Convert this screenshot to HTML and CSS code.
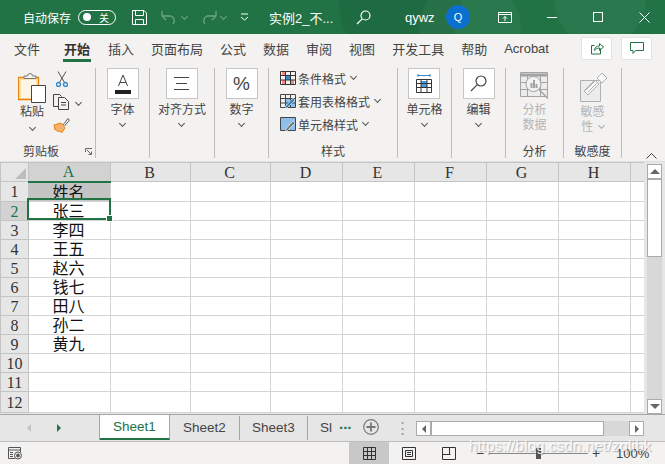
FILE: index.html
```html
<!DOCTYPE html>
<html lang="zh-CN">
<head>
    <meta charset="UTF-8">
    <meta name="viewport" content="width=device-width, initial-scale=1.0">
    <title>实例2 - Excel</title>
    <link rel="stylesheet" href="styles.css">
</head>
<body>

    <!-- Title bar -->
    <div class="titlebar">
        <span class="autosave-label">自动保存</span>
        <div class="toggle"><span class="toggle-dot"></span><span class="toggle-text">关</span></div>
        <svg class="tb-save" width="17" height="17" viewBox="0 0 17 17" fill="none" stroke="#fff"><path d="M1.5 1.5h11.5l2.5 2.5v11.5h-14zM4.5 1.5v5h8v-5M4.5 15.5v-5h8v5"/></svg>
        <svg class="tb-undo" width="17" height="16" viewBox="0 0 17 16" fill="none" stroke="#6fa386" stroke-width="1.3"><path d="M1 7l4 4M1 7l0-5M1 7h9a5 5 0 0 1 2 8"/></svg>
        <span class="tb-chev dim"></span>
        <svg class="tb-redo" width="17" height="16" viewBox="0 0 17 16" fill="none" stroke="#6fa386" stroke-width="1.3"><path d="M16 7l-4 4M16 7l0-5M16 7h-9a5 5 0 0 0-2 8"/></svg>
        <span class="tb-chev dim"></span>
        <svg class="tb-custom" width="9" height="8" viewBox="0 0 9 8" fill="none" stroke="#fff"><path d="M1 1h7M1 4l3.500 3 3.500-3"/></svg>
        <span class="doc-name">实例2_不...</span>
        <svg class="tb-search" width="15" height="15" viewBox="0 0 15 15" fill="none" stroke="#fff" stroke-width="1.2"><circle cx="9.500" cy="5.500" r="4.500"/><path d="M6.200 8.800L1 14"/></svg>
        <span class="user-name">qywz</span>
        <div class="avatar">Q</div>
        <svg class="tb-display" width="14" height="11" viewBox="0 0 14 11" fill="none" stroke="#fff"><path d="M.5.500h13v10h-13zM.5 2.500h13M7 9V4.500M5 6.500l2-2 2 2"/></svg>
        <span class="win-min"></span>
        <span class="win-max"></span>
        <svg class="win-close" width="11" height="11" viewBox="0 0 11 11" fill="none" stroke="#fff"><path d="M.5.500l10 10M10.500.500l-10 10"/></svg>
    </div>

    <!-- Ribbon tabs -->
    <div class="tabs">
        <span>文件</span>
        <span class="tab-active">开始</span>
        <span>插入</span>
        <span>页面布局</span>
        <span>公式</span>
        <span>数据</span>
        <span>审阅</span>
        <span>视图</span>
        <span>开发工具</span>
        <span>帮助</span>
        <span>Acrobat</span>
        <div class="tabs-actions">
            <div class="action-button">
                <svg width="14" height="14" viewBox="0 0 14 14" fill="none" stroke="#217346"><path d="M10.500 7.500v5.500h-9V4.500h3"/><path d="M4.500 9.500c0-3 2-4.500 5-4.500V2.500l4 3.500-4 3.500V7c-2 0-3.500.500-5 2.500z"/></svg>
            </div>
            <div class="action-button">
                <svg width="14" height="13" viewBox="0 0 14 13" fill="none" stroke="#217346"><path d="M.5.500h13v8h-8l-2.500 3v-3h-2.500z"/></svg>
            </div>
        </div>
    </div>

    <!-- Ribbon -->
    <div class="ribbon">
        <div class="group group-clipboard">
            <div class="group-body clip-body">
                <div class="paste">
                    <svg width="28" height="31" viewBox="0 0 28 31" fill="none"><path d="M.5 5.500h20v22h-20z" fill="#fbe3b4" stroke="#e8830c" stroke-width="1.300"/><path d="M3 8h15v18H3z" fill="#fdf6e6"/><path d="M6 6.500V4h3.500a2.500 2.500 0 0 1 5 0H18v2.500z" fill="#f3f2f1" stroke="#777"/><path d="M13.500 13.500h14v17h-14z" fill="#fff" stroke="#444"/></svg>
                    <span>粘贴</span>
                    <i class="chev"></i>
                </div>
                <div class="clip-tools">
                    <svg class="clip-cut" width="12" height="16" viewBox="0 0 12 16" fill="none" stroke="#555"><path d="M2 .5l6.500 11M10 .5l-6.500 11"/><circle cx="2.500" cy="13.500" r="2" stroke="#2e86c9" stroke-width="1.300"/><circle cx="9.500" cy="13.500" r="2" stroke="#2e86c9" stroke-width="1.300"/></svg>
                    <div class="clip-copy">
                        <svg width="17" height="16" viewBox="0 0 17 16" fill="none" stroke="#444"><path d="M5.500 12.500H.5V.5h6l2 2"/><path d="M5.500 3.500h6l4 4v8h-10zM8 8.500h5M8 11h5"/></svg>
                        <i class="chev"></i>
                    </div>
                    <svg class="clip-brush" width="17" height="15" viewBox="0 0 17 15" fill="none"><path d="M1 7l7-2 4 5-3 4.500L6 13l-1.500.500L3 11.500 2 12z" fill="#f6b26b" stroke="#e8830c"/><path d="M10 7l5-6.500 1.500 1.500-5 6" fill="#fff" stroke="#555"/></svg>
                </div>
            </div>
            <div class="group-label">剪贴板
                <svg class="launcher" width="7" height="7" viewBox="0 0 7 7" fill="none" stroke="#666"><path d="M.5 4V.5H7M2 2l4.500 4.500M3.500 6.500h3v-3"/></svg>
            </div>
        </div>

        <div class="group group-font">
            <div class="group-body big-button">
                <div class="big-box">
                    <svg width="16" height="20" viewBox="0 0 16 20"><path d="M3.500 12L8 1l4.500 11M5 8.500h6" fill="none" stroke="#444"/><path d="M0 16h16v4H0z" fill="#222"/></svg>
                </div>
                <span>字体</span>
                <i class="chev"></i>
            </div>
        </div>

        <div class="group group-align">
            <div class="group-body big-button">
                <div class="big-box">
                    <svg width="15" height="13" viewBox="0 0 15 13" fill="none" stroke="#444"><path d="M0 .5h15M2 6.500h11M0 12.500h15"/></svg>
                </div>
                <span>对齐方式</span>
                <i class="chev"></i>
            </div>
        </div>

        <div class="group group-number">
            <div class="group-body big-button">
                <div class="big-box percent">%</div>
                <span>数字</span>
                <i class="chev"></i>
            </div>
        </div>

        <div class="group group-styles">
            <div class="group-body style-list">
                <div class="style-row">
                    <svg width="16" height="14" viewBox="0 0 16 14"><path d="M2 1h4v4H2zM2 9h4v4H2zM10 9h4v4h-4z" fill="#f28b8b"/><path d="M6 5h4v4H6z" fill="#3a8ad1"/><path d="M.5.500h15v13H.5zM.5 4.500h15M.5 9h15M5.500.5v13M10.500.5v13" fill="none" stroke="#333"/></svg>
                    <span>条件格式</span><i class="chev"></i>
                </div>
                <div class="style-row">
                    <svg width="16" height="14" viewBox="0 0 16 14"><path d="M6 5h9v8H6z" fill="#8cc0ea"/><path d="M.5.500h15v13H.5zM.5 4.500h15M.5 9h15M5.500.5v13M10.500.5v13" fill="none" stroke="#444"/><path d="M5 13l8-9 2 2-8 8z" fill="#2e7cc0" stroke="#fff" stroke-width=".6"/></svg>
                    <span>套用表格格式</span><i class="chev"></i>
                </div>
                <div class="style-row">
                    <svg width="16" height="14" viewBox="0 0 16 14"><path d="M1 1h14v12H1z" fill="#8cc0ea"/><path d="M.5.500h15v13H.5z" fill="none" stroke="#444"/><path d="M5 13l8-9 2 2-8 8z" fill="#777" stroke="#fff" stroke-width=".6"/></svg>
                    <span>单元格样式</span><i class="chev"></i>
                </div>
            </div>
            <div class="group-label">样式</div>
        </div>

        <div class="group group-cells">
            <div class="group-body big-button">
                <div class="big-box">
                    <svg width="16" height="19" viewBox="0 0 16 19" fill="none"><path d="M5 7h6v6H5z" fill="#4a9ad8"/><path d="M.5 5.500h15v13H.5zM.5 9.500h15M.5 13.500h15M5 5.500v13M11 5.500v13" stroke="#333"/><path d="M2 1.500h12M2 0v3M14 0v3" stroke="#2e86c9"/></svg>
                </div>
                <span>单元格</span>
                <i class="chev"></i>
            </div>
        </div>

        <div class="group group-edit">
            <div class="group-body big-button">
                <div class="big-box">
                    <svg width="17" height="17" viewBox="0 0 17 17" fill="none" stroke="#444" stroke-width="1.200"><circle cx="11" cy="6" r="5"/><path d="M7.300 9.700L1 16"/></svg>
                </div>
                <span>编辑</span>
                <i class="chev"></i>
            </div>
        </div>

        <div class="group group-analysis">
            <div class="group-body muted-button">
                <svg width="29" height="28" viewBox="0 0 29 28" fill="none" stroke="#a3a3a3"><path d="M.5.500h27v24H.5z" fill="#ececec"/><path d="M.5 3h27" stroke-width="3"/><path d="M.5 10.500h27M.5 17.500h27M7.500 3v21M20.500 3v21"/><circle cx="13.500" cy="12" r="7.500" fill="#f3f2f1"/><path d="M10.500 11h2v5h-2zM13 8h2v8h-2zM15.500 12h2v4h-2z" fill="#a3a3a3" stroke="none"/><path d="M19 17.500l9 9" stroke-width="1.500"/></svg>
                <span>分析<br>数据</span>
            </div>
            <div class="group-label">分析</div>
        </div>

        <div class="group group-sens">
            <div class="group-body muted-button">
                <svg class="sens-icon" width="28" height="30" viewBox="0 0 28 30" fill="none" stroke="#b0b0b0"><path d="M.5 8.500h20v21H.5z" fill="#ececec"/><path d="M4 19L15 8l4 4-11 11z" fill="#f8f8f8"/><path d="M6 18l9-9M8 20l9-9"/><path d="M17 6l5-5 5 5-5 5z" fill="#f8f8f8"/></svg>
                <span>敏感<br>性 <i class="chev chev-muted"></i></span>
            </div>
            <div class="group-label">敏感度</div>
        </div>

        <svg class="ribbon-collapse" width="11" height="6" viewBox="0 0 11 6" fill="none" stroke="#444"><path d="M.5 5.500l5-5 5 5"/></svg>
    </div>

    <!-- Sheet -->
    <div class="sheet-area">
        <div class="grid-wrap">
            <table class="sheet">
                <colgroup>
                    <col class="c-head"><col class="c-a"><col class="c-wide"><col class="c-wide"><col class="c-std"><col class="c-std"><col class="c-std"><col class="c-std"><col class="c-std"><col class="c-rest">
                </colgroup>
                <tr class="head-row"><th class="corner"><i></i></th><th class="sel-col">A</th><th>B</th><th>C</th><th>D</th><th>E</th><th>F</th><th>G</th><th>H</th><th></th></tr>
                <tr><th>1</th><td class="sel-head">姓名</td><td></td><td></td><td></td><td></td><td></td><td></td><td></td><td></td></tr>
                <tr><th class="sel-row">2</th><td>张三</td><td></td><td></td><td></td><td></td><td></td><td></td><td></td><td></td></tr>
                <tr><th>3</th><td>李四</td><td></td><td></td><td></td><td></td><td></td><td></td><td></td><td></td></tr>
                <tr><th>4</th><td>王五</td><td></td><td></td><td></td><td></td><td></td><td></td><td></td><td></td></tr>
                <tr><th>5</th><td>赵六</td><td></td><td></td><td></td><td></td><td></td><td></td><td></td><td></td></tr>
                <tr><th>6</th><td>钱七</td><td></td><td></td><td></td><td></td><td></td><td></td><td></td><td></td></tr>
                <tr><th>7</th><td>田八</td><td></td><td></td><td></td><td></td><td></td><td></td><td></td><td></td></tr>
                <tr><th>8</th><td>孙二</td><td></td><td></td><td></td><td></td><td></td><td></td><td></td><td></td></tr>
                <tr><th>9</th><td>黄九</td><td></td><td></td><td></td><td></td><td></td><td></td><td></td><td></td></tr>
                <tr><th>10</th><td></td><td></td><td></td><td></td><td></td><td></td><td></td><td></td><td></td></tr>
                <tr><th>11</th><td></td><td></td><td></td><td></td><td></td><td></td><td></td><td></td><td></td></tr>
                <tr class="row-tall"><th>12</th><td></td><td></td><td></td><td></td><td></td><td></td><td></td><td></td><td></td></tr>
            </table>
            <div class="cell-cursor"><i></i></div>
        </div>
        <div class="vscroll">
            <div class="sb-btn"><i class="tri tri-up"></i></div>
            <div class="vthumb"></div>
            <div class="vtrack"></div>
            <div class="sb-btn"><i class="tri tri-down"></i></div>
        </div>
    </div>

    <!-- Sheet tabs -->
    <div class="tabbar">
        <div class="sheet-nav"><i class="tri tri-left dim"></i><i class="tri tri-right green"></i></div>
        <div class="sheet-tab active">Sheet1</div>
        <div class="sheet-tab">Sheet2</div>
        <div class="sheet-tab sep">Sheet3</div>
        <div class="sheet-tab cut">Sl</div>
        <div class="more-tabs">...</div>
        <div class="add-sheet">
            <svg width="16" height="16" viewBox="0 0 16 16" fill="none" stroke="#777"><circle cx="8" cy="8" r="7.300" stroke-width="1.200"/><path d="M8 3.500v9M3.500 8h9" stroke-width="1.800"/></svg>
        </div>
        <div class="tab-dots">⋮</div>
        <div class="hscroll">
            <div class="hs-btn"><i class="tri tri-left"></i></div>
            <div class="hthumb"></div>
            <div class="htrack"></div>
            <div class="hs-btn"><i class="tri tri-right"></i></div>
        </div>
    </div>

    <!-- Status bar -->
    <div class="statusbar">
        <svg class="macro-icon" width="14" height="13" viewBox="0 0 14 13" fill="none" stroke="#555"><path d="M7 11.500H.5V.5h12V5M.5 3h12M2 5.500h3M2 7.500h3M2 9.500h3"/><circle cx="10" cy="8.500" r="3.500"/><circle cx="10" cy="8.500" r="1.500" fill="#555"/></svg>
        <div class="view-button active">
            <svg width="13" height="13" viewBox="0 0 13 13" fill="none" stroke="#333"><path d="M.5.500h12v12H.5zM.5 4.500h12M.5 8.500h12M4.500.5v12M8.500.5v12"/></svg>
        </div>
        <div class="view-button">
            <svg width="14" height="13" viewBox="0 0 14 13" fill="none" stroke="#333"><path d="M.5.500h13v12H.5zM3.500 3.500h7v6h-7zM5 5.500h4M5 7.500h4"/></svg>
        </div>
        <div class="view-button">
            <svg width="14" height="13" viewBox="0 0 14 13" fill="none" stroke="#333"><path d="M.5.500h13v12H.5zM.5 7.500h8M7.500.5v7"/></svg>
        </div>
        <div class="zoom-ctl">
            <span class="zoom-sign">−</span>
            <div class="zoom-slider"><i></i></div>
            <span class="zoom-sign">+</span>
            <span class="zoom-value">100%</span>
        </div>
    </div>

    <div class="watermark">https://blog.csdn.net/zqlibk</div>

</body>
</html>
```
FILE: styles.css
```css
:root {
    --green: #217346;
    --ribbon-bg: #f3f2f1;
    --bar-bg: #e6e6e6;
    --grid-line: #d4d4d4;
    --text-dark: #444444;
    --ui-font: "Liberation Sans", "Noto Sans CJK SC", sans-serif;
    --cell-font: "Liberation Serif", "Noto Sans CJK SC", serif;
}

* {
    margin: 0;
    padding: 0;
    box-sizing: border-box;
}

body {
    position: relative;
    width: 665px;
    height: 464px;
    overflow: hidden;
    font-family: var(--ui-font);
    font-size: 12px;
    color: var(--text-dark);
    background-color: var(--ribbon-bg);
}

i {
    display: block;
}

/* Title bar */
.titlebar {
    display: flex;
    align-items: center;
    height: 34px;
    padding-left: 23px;
    color: #fff;
    background-color: var(--green);
    background-image:
        radial-gradient(circle at 400px 5px, rgba(0, 0, 0, 0.07) 0 60px, transparent 62px),
        radial-gradient(circle at 470px 30px, rgba(255, 255, 255, 0.04) 0 50px, transparent 52px),
        radial-gradient(circle at 600px 0, rgba(255, 255, 255, 0.04) 0 45px, transparent 47px);
}

.autosave-label {
    width: 55px;
}

.toggle {
    display: flex;
    align-items: center;
    justify-content: space-between;
    width: 38px;
    height: 15px;
    padding: 0 6px 0 4px;
    border: 1px solid #fff;
    border-radius: 8px;
    font-size: 10px;
}

.toggle-dot {
    width: 8px;
    height: 8px;
    border-radius: 50%;
    background-color: #fff;
}

.tb-save { margin-left: 15px; }
.tb-undo { margin-left: 13px; }
.tb-redo { margin-left: 13px; }
.tb-custom { margin-left: 14px; }

.tb-chev {
    width: 5px;
    height: 5px;
    margin: -2px 0 0 4px;
    border-right: 1px solid #fff;
    border-bottom: 1px solid #fff;
    transform: rotate(45deg);
}

.tb-chev.dim {
    border-color: #6fa386;
}

.doc-name {
    width: 62px;
    margin-left: 20px;
    font-size: 13px;
    white-space: nowrap;
}

.tb-search { margin-left: 25px; }

.user-name {
    width: 40px;
    margin-left: 34px;
    font-size: 13px;
}

.avatar {
    display: flex;
    align-items: center;
    justify-content: center;
    width: 24px;
    height: 24px;
    margin-left: 1px;
    border-radius: 50%;
    font-size: 11px;
    background-color: #0a6fcf;
}

.tb-display { margin-left: 28px; }

.win-min {
    width: 10px;
    height: 1px;
    margin-left: 35px;
    background-color: #fff;
}

.win-max {
    width: 10px;
    height: 10px;
    margin-left: 36px;
    border: 1px solid #fff;
}

.win-close { margin-left: 36px; }

/* Ribbon tabs */
.tabs {
    display: flex;
    align-items: center;
    gap: 17px;
    height: 28px;
    padding: 0 13px 0 14px;
    font-size: 13px;
    background-color: var(--ribbon-bg);
}

.tab-active {
    position: relative;
    margin: 0 1px 0 7px;
    font-weight: bold;
    color: #333;
}

.tab-active::after {
    content: "";
    position: absolute;
    left: -1px;
    right: -1px;
    top: 20px;
    height: 3px;
    background-color: var(--green);
}

.tabs-actions {
    display: flex;
    gap: 9px;
    margin-left: auto;
}

.action-button {
    display: flex;
    align-items: center;
    justify-content: center;
    width: 31px;
    height: 23px;
    border: 1px solid #e2e2e2;
    border-radius: 2px;
    background-color: #fff;
}

/* Ribbon */
.ribbon {
    position: relative;
    display: flex;
    height: 100px;
    padding: 6px 0 4px;
    border-bottom: 1px solid #e0e0e0;
}

.group {
    display: flex;
    flex-direction: column;
    align-items: center;
    height: 90px;
    border-right: 1px solid #bdbdbd;
}

.group-clipboard { width: 96px; }
.group-font { width: 54px; }
.group-align { width: 65px; }
.group-number { width: 54px; }
.group-styles { width: 129px; }
.group-cells { width: 54px; }
.group-edit { width: 54px; }
.group-analysis { width: 58px; }
.group-sens { width: 58px; }

.group-body {
    flex: 1;
}

.group-label {
    position: relative;
    height: 16px;
    line-height: 20px;
    text-align: center;
}

.chev {
    width: 5px;
    height: 5px;
    border-right: 1px solid #555;
    border-bottom: 1px solid #555;
    transform: rotate(45deg);
}

.chev-muted {
    display: inline-block;
    margin: 0 0 3px 2px;
    border-color: #aaa;
}

/* Clipboard group */
.group-clipboard {
    align-items: stretch;
}

.clip-body {
    display: flex;
    padding: 4px 0 0 18px;
}

.paste {
    display: flex;
    flex-direction: column;
    align-items: center;
    width: 28px;
}

.paste span {
    margin-top: 1px;
    line-height: 16px;
}

.paste .chev {
    margin-top: 5px;
}

.clip-tools {
    display: flex;
    flex-direction: column;
    align-items: flex-start;
    gap: 7px;
    margin-left: 7px;
}

.clip-cut {
    margin: -1px 0 0 3px;
}

.clip-copy {
    display: flex;
    align-items: center;
    gap: 6px;
}

.clip-brush {
    margin-top: 1px;
}

.group-clipboard .group-label {
    padding-right: 13px;
}

.launcher {
    position: absolute;
    right: 3px;
    top: 6px;
}

/* Big ribbon buttons */
.big-button {
    display: flex;
    flex-direction: column;
    align-items: center;
}

.big-box {
    display: flex;
    align-items: center;
    justify-content: center;
    width: 32px;
    height: 31px;
    margin-bottom: 3px;
    border: 1px solid #c6c6c6;
    background-color: #fff;
}

.big-button span {
    line-height: 16px;
}

.big-button .chev {
    margin-top: 3px;
}

.percent {
    font-size: 19px;
    color: #444;
}

/* Styles list */
.style-list {
    display: flex;
    flex-direction: column;
    align-items: flex-start;
    gap: 7px;
    width: 100%;
    padding: 2px 0 0 11px;
}

.style-row {
    display: flex;
    align-items: center;
    height: 16px;
}

.style-row span {
    margin-left: 2px;
}

.style-row .chev {
    margin: -3px 0 0 5px;
}

/* Greyed out buttons */
.muted-button {
    display: flex;
    flex-direction: column;
    align-items: center;
    padding-top: 4px;
}

.muted-button span {
    margin-top: 3px;
    line-height: 15px;
    text-align: center;
    color: #b4b4b4;
}

.sens-icon {
    margin-left: 3px;
}

.ribbon-collapse {
    position: absolute;
    left: 646px;
    top: 91px;
}

/* Sheet */
.sheet-area {
    display: flex;
    height: 252px;
    background-color: var(--bar-bg);
}

.grid-wrap {
    position: relative;
    width: 644px;
    overflow: hidden;
}

.sheet {
    width: 644px;
    border-collapse: collapse;
    table-layout: fixed;
    background-color: #fff;
}

.c-head { width: 28px; }
.c-a { width: 82px; }
.c-wide { width: 80px; }
.c-std { width: 72px; }
.c-rest { width: 14px; }

.sheet tr {
    height: 19px;
}

.sheet .row-tall {
    height: 21px;
}

.sheet th {
    padding: 2px 0 0;
    font-family: var(--cell-font);
    font-size: 16px;
    font-weight: normal;
    line-height: 16px;
    color: #333;
    background-color: var(--bar-bg);
    border: 1px solid #c4c4c4;
}

.sheet .head-row th {
    padding: 1px 2px 0 0;
}

.sheet td {
    padding: 2px 2px 0 0;
    font-family: var(--cell-font);
    font-size: 16px;
    line-height: 16px;
    text-align: center;
    color: #111;
    border: 1px solid var(--grid-line);
}

.sheet td:last-child {
    border-right-color: #a6a6a6;
}

.sheet th.corner {
    position: relative;
}

.corner i {
    position: absolute;
    right: 2px;
    bottom: 2px;
    width: 0;
    height: 0;
    border-left: 11px solid transparent;
    border-bottom: 11px solid #bdbdbd;
}

.sheet th.sel-col {
    color: var(--green);
    background-color: #d2d2d2;
    border-bottom: 2px solid var(--green);
}

.sheet th.sel-row {
    color: var(--green);
    background-color: #d2d2d2;
}

.sheet td.sel-head {
    background-color: #c4c4c4;
}

/* Active cell outline, sits on top of the table */
.cell-cursor {
    position: absolute;
    left: 27px;
    top: 36px;
    width: 84px;
    height: 22px;
    border: 2px solid var(--green);
}

.cell-cursor i {
    position: absolute;
    right: -4px;
    bottom: -4px;
    width: 7px;
    height: 7px;
    border: 1px solid #fff;
    background-color: var(--green);
}

/* Scroll bars */
.vscroll {
    display: flex;
    flex-direction: column;
    width: 21px;
    padding: 2px 3px 0;
}

.sb-btn {
    display: flex;
    flex: none;
    align-items: center;
    justify-content: center;
    height: 15px;
    border: 1px solid #ababab;
    background-color: #fff;
}

.vthumb {
    flex: none;
    height: 78px;
    border: 1px solid #ababab;
    background-color: #fff;
}

.vtrack {
    flex: 1;
    background-color: #d8d8d8;
}

.tri {
    width: 0;
    height: 0;
    border-style: solid;
    border-color: transparent;
}

.tri-up {
    border-width: 0 5px 5px;
    border-bottom-color: #666;
}

.tri-down {
    border-width: 5px 5px 0;
    border-top-color: #666;
}

.tri-left {
    border-width: 4px 4px 4px 0;
    border-right-color: #666;
}

.tri-right {
    border-width: 4px 0 4px 4px;
    border-left-color: #666;
}

.tri-left.dim {
    border-right-color: #c4c4c4;
}

.tri-right.green {
    border-left-color: var(--green);
}

/* Sheet tabs */
.tabbar {
    display: flex;
    align-items: flex-start;
    height: 28px;
    border-top: 1px solid #a6a6a6;
    border-bottom: 1px solid #bdbdbd;
    background-color: var(--bar-bg);
}

.sheet-nav {
    display: flex;
    align-items: center;
    gap: 26px;
    width: 100px;
    height: 25px;
    padding-left: 27px;
    border-right: 1px solid #a6a6a6;
}

.sheet-tab {
    width: 69px;
    height: 24px;
    margin-top: 1px;
    font-size: 13.500px;
    line-height: 23px;
    text-align: center;
    color: #444;
}

.sheet-tab.active {
    width: 70px;
    height: 25px;
    margin-top: 0;
    line-height: 24px;
    color: var(--green);
    background-color: #fff;
    border-bottom: 2px solid var(--green);
    border-right: 1px solid #a6a6a6;
}

.sheet-tab.sep {
    border-left: 1px solid #a6a6a6;
    border-right: 1px solid #a6a6a6;
}

.sheet-tab.cut {
    width: 30px;
    text-align: left;
    padding-left: 12px;
    overflow: hidden;
}

.more-tabs {
    width: 22px;
    padding-left: 1px;
    font-size: 15px;
    font-weight: bold;
    line-height: 18px;
    color: var(--green);
}

.add-sheet {
    width: 28px;
    padding: 4px 0 0 1px;
    margin-left: 2px;
}

.tab-dots {
    width: 26px;
    padding-left: 5px;
    font-size: 15px;
    line-height: 26px;
    color: #999;
}

.hscroll {
    display: flex;
    width: 228px;
    height: 15px;
    margin-top: 6px;
}

.hs-btn {
    display: flex;
    flex: none;
    align-items: center;
    justify-content: center;
    width: 15px;
    border: 1px solid #ababab;
    background-color: #fff;
}

.hthumb {
    flex: none;
    width: 173px;
    border: 1px solid #ababab;
    background-color: #fff;
}

.htrack {
    flex: 1;
    background-color: #d8d8d8;
}

/* Status bar */
.statusbar {
    display: flex;
    align-items: center;
    height: 22px;
    padding-left: 8px;
    background-color: var(--ribbon-bg);
}

.macro-icon {
    margin-right: 327px;
}

.view-button {
    display: flex;
    align-items: center;
    justify-content: center;
    width: 40px;
    height: 22px;
}

.view-button.active {
    background-color: #c8c8c8;
}

.zoom-ctl {
    display: flex;
    align-items: center;
    margin-left: 6px;
    font-size: 13px;
}

.zoom-sign {
    width: 10px;
    font-size: 14px;
    text-align: center;
}

.zoom-slider {
    position: relative;
    width: 100px;
    height: 1px;
    margin: 0 3px;
    background-color: #888;
}

.zoom-slider i {
    position: absolute;
    left: 48px;
    top: -5px;
    width: 5px;
    height: 11px;
    background-color: #555;
}

.zoom-value {
    margin-left: 15px;
}

/* Blog watermark over the lower right corner */
.watermark {
    position: absolute;
    left: 469px;
    top: 437px;
    font-size: 15px;
    letter-spacing: 0.2px;
    color: rgba(255, 255, 255, 0.85);
    text-shadow: 1px 1px 1px rgba(90, 90, 90, 0.45);
    white-space: nowrap;
}
```
